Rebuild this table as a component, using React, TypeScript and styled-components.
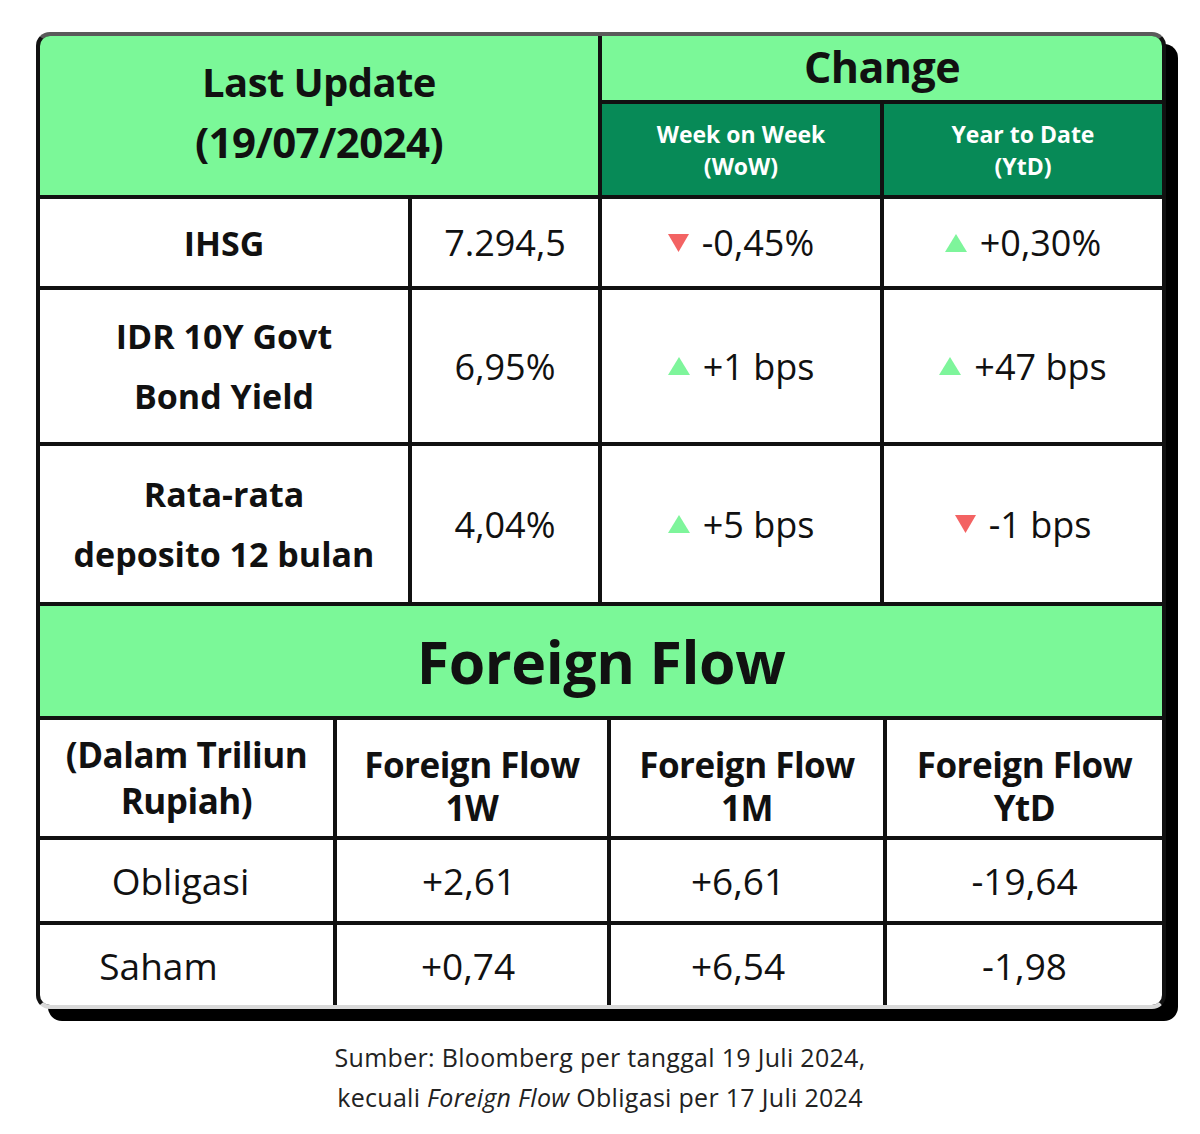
import React from "react";
import styled, { createGlobalStyle } from "styled-components";

const Global = createGlobalStyle`
  html, body { margin: 0; padding: 0; background: #ffffff; }
  body { font-family: "Open Sans", "Noto Sans", sans-serif; color: #111; }
`;

const LIGHT = "#7bf898";
const DARK = "#078a57";
const LINE = "#111111";

const Page = styled.div`
  width: 1200px;
  padding: 32px 0 0 36px;
  box-sizing: border-box;
`;

const Card = styled.div`
  width: 1130px;
  box-sizing: border-box;
  border: 4px solid ${LINE};
  border-top-color: #5a5a5a;
  border-bottom-color: #d9d9d9;
  border-radius: 14px;
  box-shadow: 12px 12px 0 #000;
  background: ${LINE};
  overflow: hidden;
  display: flex;
  flex-direction: column;
  gap: 4px;
`;

const TopGrid = styled.div`
  display: grid;
  grid-template-columns: 368px 186px 278px 278px;
  grid-template-rows: 64px 91px 87px 152px 156px;
  gap: 4px;
`;

const BottomGrid = styled.div`
  display: grid;
  grid-template-columns: 293px 270px 272px 275px;
  grid-template-rows: 116px 81px 80px;
  gap: 4px;
`;

type CellProps = { $bg?: string; $span?: string; $rows?: string; $lift?: number };

const Cell = styled.div<CellProps>`
  background: ${(p) => p.$bg || "#ffffff"};
  grid-column: ${(p) => p.$span || "auto"};
  grid-row: ${(p) => p.$rows || "auto"};
  display: flex;
  flex-direction: column;
  align-items: center;
  justify-content: center;
  text-align: center;
  box-sizing: border-box;
  padding-bottom: ${(p) => ((p.$lift || 0) > 0 ? p.$lift : 0)}px;
  padding-top: ${(p) => ((p.$lift || 0) < 0 ? -(p.$lift as number) : 0)}px;
`;

const BigHead = styled.div<{ $size: number }>`
  font-weight: 700;
  font-size: ${(p) => p.$size}px;
  line-height: 60px;
  letter-spacing: -0.6px;
  color: #111;
  white-space: nowrap;
`;

const SubHead = styled.div`
  font-weight: 700;
  font-size: 23px;
  line-height: 32px;
  color: #ffffff;
  letter-spacing: 0;
  white-space: nowrap;
`;

const RowLabel = styled.div<{ $lh: number }>`
  font-weight: 700;
  font-size: 34px;
  line-height: ${(p) => p.$lh}px;
  color: #111;
  white-space: nowrap;
`;

const Value = styled.div`
  font-weight: 400;
  font-size: 36px;
  color: #111;
  display: flex;
  align-items: center;
  gap: 13px;
  white-space: nowrap;
`;

const Title = styled.div`
  background: ${LIGHT};
  height: 110px;
  display: flex;
  align-items: center;
  justify-content: center;
  font-weight: 700;
  font-size: 59px;
  letter-spacing: -0.4px;
  color: #111;
`;

const ColHead = styled.div<{ $lh: number }>`
  font-weight: 700;
  font-size: 35px;
  line-height: ${(p) => p.$lh}px;
  color: #111;
  letter-spacing: -0.5px;
  white-space: nowrap;
`;

const FlowValue = styled.div<{ $shift?: number }>`
  font-weight: 400;
  font-size: 37px;
  color: #111;
  margin-right: ${(p) => (p.$shift || 0) * 2}px;
  white-space: nowrap;
`;

const Note = styled.div`
  width: 1200px;
  margin: 28px 0 0 -36px;
  text-align: center;
  font-size: 25px;
  letter-spacing: 0.3px;
  line-height: 40px;
  color: #222;
`;

const Tri = ({ up }: { up: boolean }) =>
  up ? (
    <svg width="22" height="18" viewBox="0 0 22 18">
      <polygon points="11,0 22,18 0,18" fill="#7ef59b" />
    </svg>
  ) : (
    <svg width="21" height="18" viewBox="0 0 21 18">
      <polygon points="0,0 21,0 10.5,18" fill="#f36363" />
    </svg>
  );

const Change = ({ up, text }: { up: boolean; text: string }) => (
  <Value>
    <Tri up={up} />
    <span>{text}</span>
  </Value>
);

export default function App() {
  return (
    <>
      <Global />
      <Page>
        <Card>
          <TopGrid>
            <Cell $bg={LIGHT} $span="1 / 3" $rows="1 / 3" $lift={8}>
              <BigHead $size={40}>Last Update</BigHead>
              <BigHead $size={42}>(19/07/2024)</BigHead>
            </Cell>
            <Cell $bg={LIGHT} $span="3 / 5" $lift={3}>
              <BigHead $size={43}>Change</BigHead>
            </Cell>
            <Cell $bg={DARK}>
              <SubHead>Week on Week</SubHead>
              <SubHead>(WoW)</SubHead>
            </Cell>
            <Cell $bg={DARK}>
              <SubHead>Year to Date</SubHead>
              <SubHead>(YtD)</SubHead>
            </Cell>

            <Cell>
              <RowLabel $lh={40}>IHSG</RowLabel>
            </Cell>
            <Cell>
              <Value>7.294,5</Value>
            </Cell>
            <Cell>
              <Change up={false} text="-0,45%" />
            </Cell>
            <Cell>
              <Change up={true} text="+0,30%" />
            </Cell>

            <Cell>
              <RowLabel $lh={60}>IDR 10Y Govt</RowLabel>
              <RowLabel $lh={60}>Bond Yield</RowLabel>
            </Cell>
            <Cell>
              <Value>6,95%</Value>
            </Cell>
            <Cell>
              <Change up={true} text="+1 bps" />
            </Cell>
            <Cell>
              <Change up={true} text="+47 bps" />
            </Cell>

            <Cell>
              <RowLabel $lh={60}>Rata-rata</RowLabel>
              <RowLabel $lh={60}>deposito 12 bulan</RowLabel>
            </Cell>
            <Cell>
              <Value>4,04%</Value>
            </Cell>
            <Cell>
              <Change up={true} text="+5 bps" />
            </Cell>
            <Cell>
              <Change up={false} text="-1 bps" />
            </Cell>
          </TopGrid>

          <Title>Foreign Flow</Title>

          <BottomGrid>
            <Cell>
              <ColHead $lh={46}>(Dalam Triliun</ColHead>
              <ColHead $lh={46}>Rupiah)</ColHead>
            </Cell>
            <Cell $lift={-16}>
              <ColHead $lh={43}>Foreign Flow</ColHead>
              <ColHead $lh={43}>1W</ColHead>
            </Cell>
            <Cell $lift={-16}>
              <ColHead $lh={43}>Foreign Flow</ColHead>
              <ColHead $lh={43}>1M</ColHead>
            </Cell>
            <Cell $lift={-16}>
              <ColHead $lh={43}>Foreign Flow</ColHead>
              <ColHead $lh={43}>YtD</ColHead>
            </Cell>

            <Cell>
              <FlowValue $shift={6}>Obligasi</FlowValue>
            </Cell>
            <Cell>
              <FlowValue $shift={3}>+2,61</FlowValue>
            </Cell>
            <Cell>
              <FlowValue $shift={9}>+6,61</FlowValue>
            </Cell>
            <Cell>
              <FlowValue>-19,64</FlowValue>
            </Cell>

            <Cell>
              <FlowValue $shift={28}>Saham</FlowValue>
            </Cell>
            <Cell>
              <FlowValue $shift={4}>+0,74</FlowValue>
            </Cell>
            <Cell>
              <FlowValue $shift={9}>+6,54</FlowValue>
            </Cell>
            <Cell>
              <FlowValue>-1,98</FlowValue>
            </Cell>
          </BottomGrid>
        </Card>
        <Note>
          Sumber: Bloomberg per tanggal 19 Juli 2024,
          <br />
          kecuali <i>Foreign Flow</i> Obligasi per 17 Juli 2024
        </Note>
      </Page>
    </>
  );
}
